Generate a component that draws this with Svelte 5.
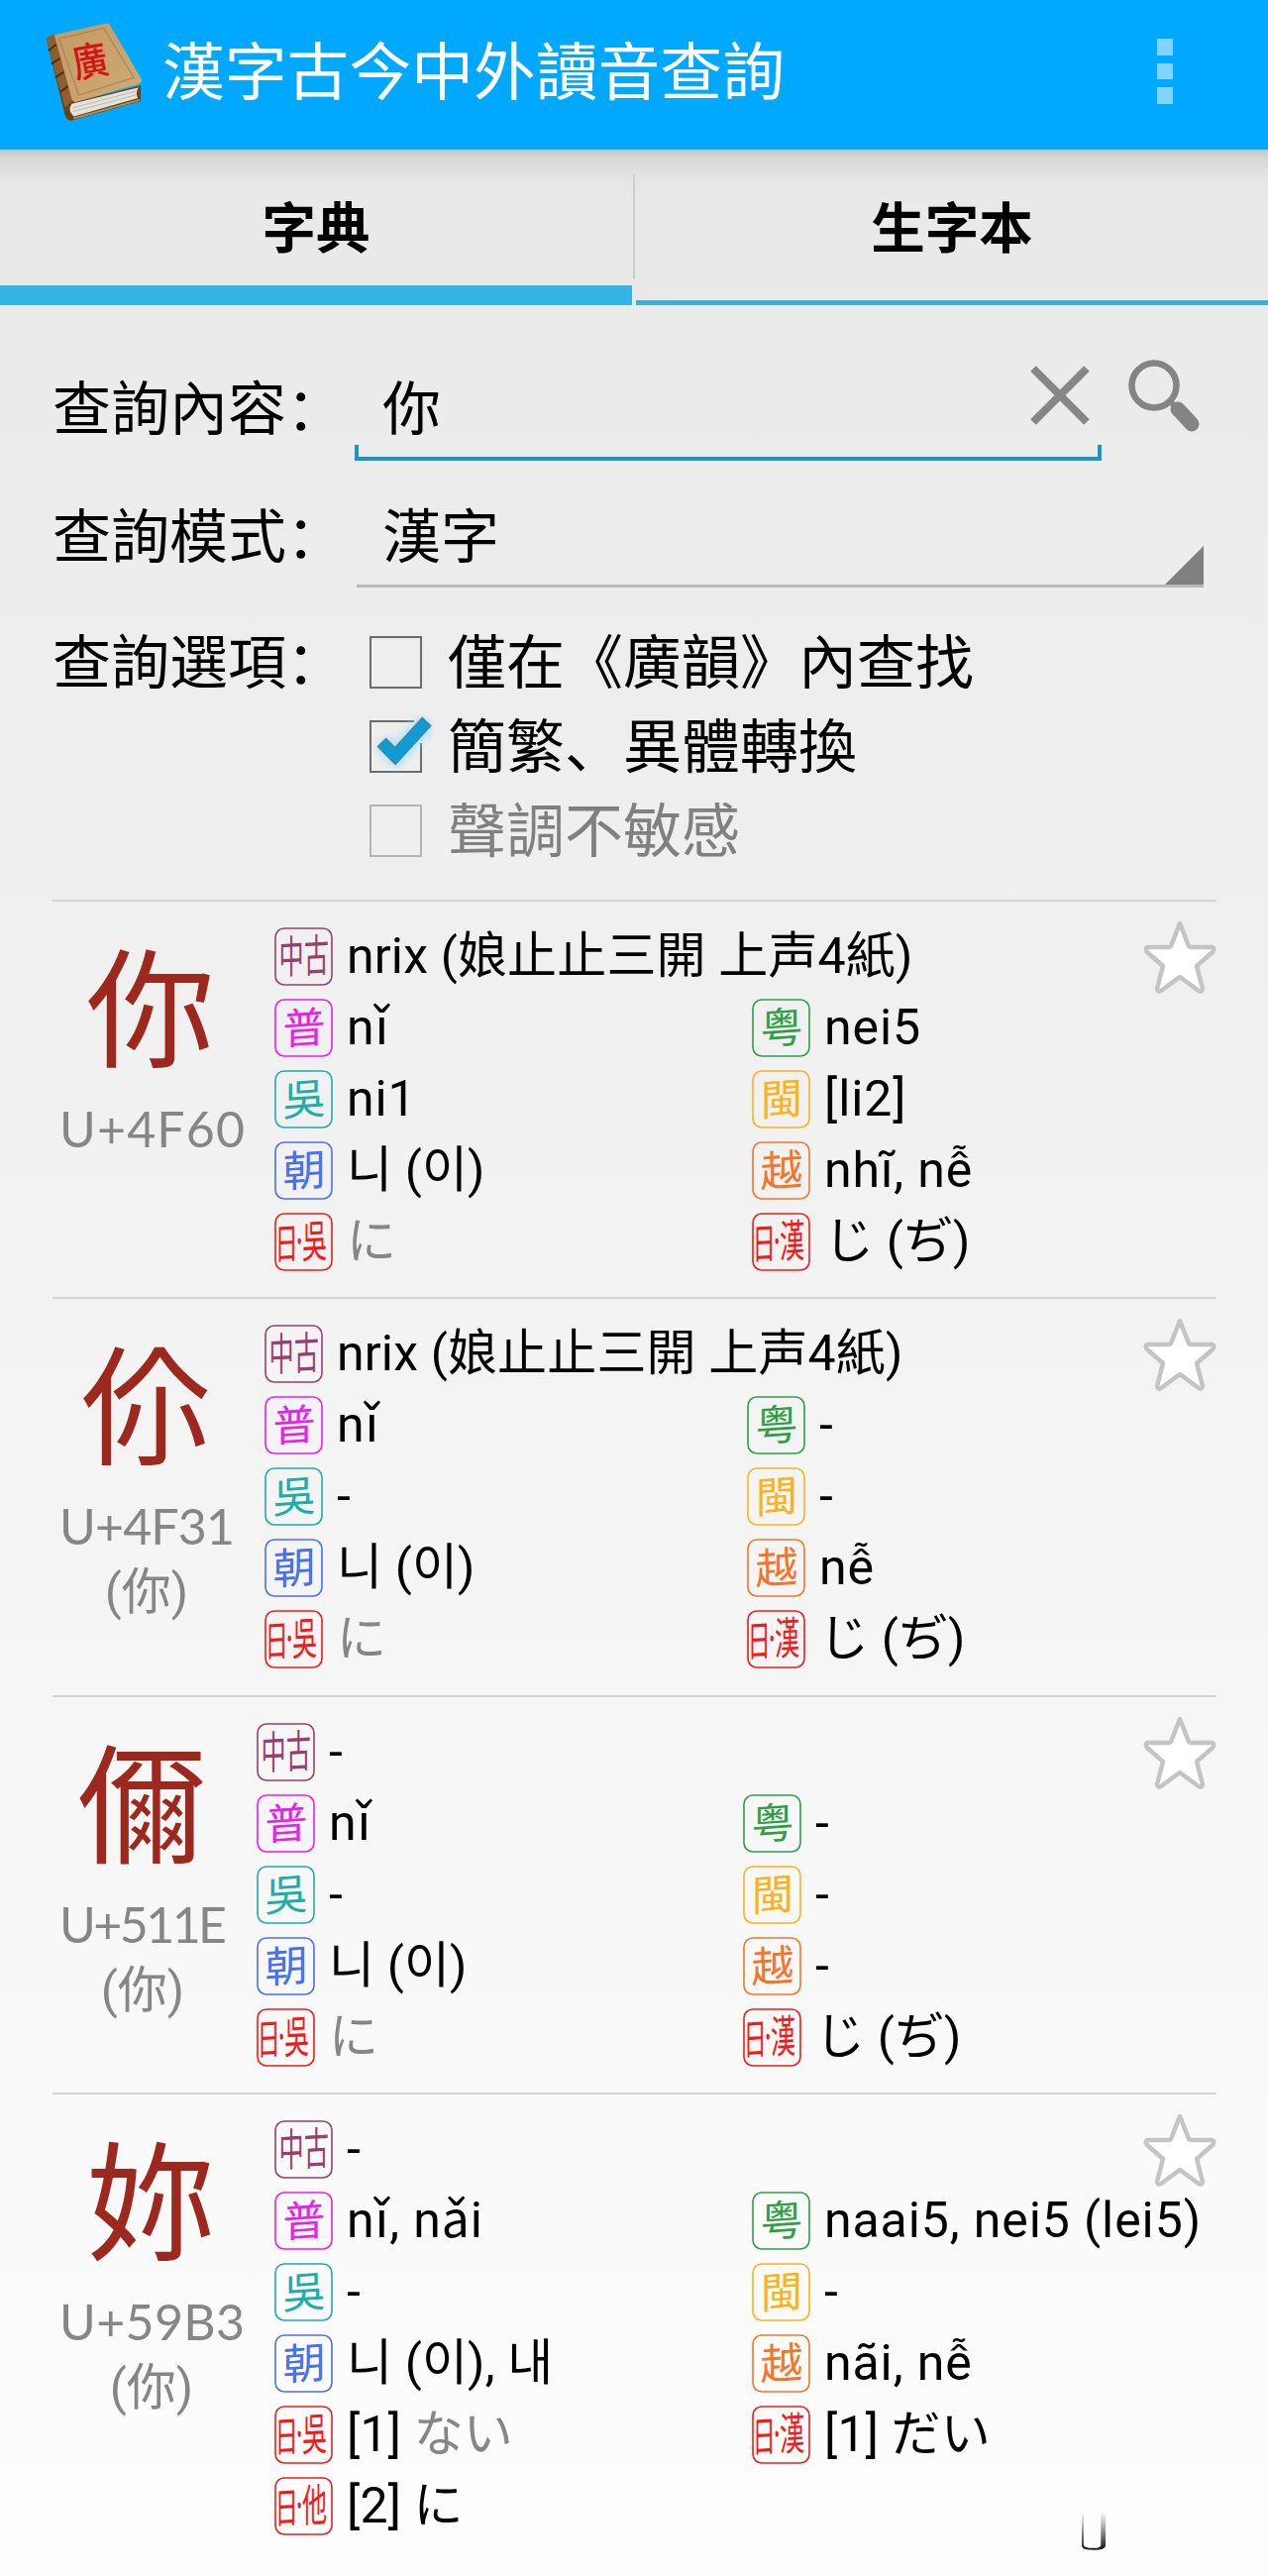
<script>
  // Label, colour and glyph scale for every reading badge
  const kinds = {
    mc: { label: '中古', color: '#96406e' },
    pu: { label: '普', color: '#ea1fea' },
    yue: { label: '粤', color: '#2f9e44' },
    wu: { label: '吳', color: '#1fada4' },
    min: { label: '閩', color: '#fab31c' },
    kr: { label: '朝', color: '#4a70ea' },
    vn: { label: '越', color: '#f2752a' },
    go: { label: '日·吳', color: '#ee1c1c' },
    kan: { label: '日·漢', color: '#ee1c1c' },
    other: { label: '日·他', color: '#ee1c1c' }
  };

  const options = [
    { text: '僅在《廣韻》內查找', checked: false, disabled: false },
    { text: '簡繁、異體轉換', checked: true, disabled: false },
    { text: '聲調不敏感', checked: false, disabled: true }
  ];

  const entries = [
    {
      char: '你', code: 'U+4F60', variant: '', width: 184,
      full: 'nrix (娘止止三開 上声4紙)',
      left: [['pu', 'nǐ'], ['wu', 'ni1'], ['kr', '니 (이)'], ['go', '', 'に']],
      right: [['yue', 'nei5'], ['min', '[li2]'], ['vn', 'nhĩ, nễ'], ['kan', 'じ (ぢ)']]
    },
    {
      char: '伱', code: 'U+4F31', variant: '(你)', width: 174,
      full: 'nrix (娘止止三開 上声4紙)',
      left: [['pu', 'nǐ'], ['wu', '-'], ['kr', '니 (이)'], ['go', '', 'に']],
      right: [['yue', '-'], ['min', '-'], ['vn', 'nễ'], ['kan', 'じ (ぢ)']]
    },
    {
      char: '儞', code: 'U+511E', variant: '(你)', width: 166,
      full: '-',
      left: [['pu', 'nǐ'], ['wu', '-'], ['kr', '니 (이)'], ['go', '', 'に']],
      right: [['yue', '-'], ['min', '-'], ['vn', '-'], ['kan', 'じ (ぢ)']]
    },
    {
      char: '妳', code: 'U+59B3', variant: '(你)', width: 184,
      full: '-',
      left: [['pu', 'nǐ, nǎi'], ['wu', '-'], ['kr', '니 (이), 내'], ['go', '[1] ', 'ない'], ['other', '[2] に']],
      right: [['yue', 'naai5, nei5 (lei5)'], ['min', '-'], ['vn', 'nãi, nễ'], ['kan', '[1] だい']]
    }
  ];

  const latinKinds = ['pu', 'wu', 'yue', 'min', 'vn'];
</script>

{#snippet reading(kind, text, muted)}
  {@const k = kinds[kind]}
  <div class="reading">
    <svg class="badge" viewBox="0 0 59 59" style:color={k.color}>
      <rect class="badge-frame" x="1" y="1" width="57" height="57" rx="9"/>
      {#if k.label.length === 1}
        <g transform="translate(0 2) skewY(-4)">
          <text class="badge-text" x="30" y="45" font-size="43" text-anchor="middle">{k.label}</text>
        </g>
      {:else if k.label.length === 2}
        <g transform="translate(0 1) skewY(-3) scale(0.56 1)">
          <text class="badge-text" x="8" y="46" font-size="45">{k.label}</text>
        </g>
      {:else}
        <g transform="translate(0 1) skewY(-3) scale(0.56 1)">
          <text class="badge-text" x="1" y="46" font-size="42">日</text>
          <circle fill="currentColor" cx="45" cy="29" r="3"/>
          <text class="badge-text" x="50" y="46" font-size="45">{k.label[2]}</text>
        </g>
      {/if}
    </svg>
    <span class="reading-text" class:latin={latinKinds.includes(kind)}>{text}{#if muted}<span class="muted">{muted}</span>{/if}</span>
  </div>
{/snippet}

<div class="app">
  <header class="bar">
    <svg class="book" viewBox="0 0 100 102">
      <defs>
        <linearGradient id="cover" x1="0" y1="0" x2="1" y2="1">
          <stop offset="0" stop-color="#c39a64"/>
          <stop offset="1" stop-color="#cfaa76"/>
        </linearGradient>
      </defs>
      <path fill="#6b4216" d="M1 18 Q2 14 9 13 L30 82 L98 65 V81 L28 101 Q22 102 20 96 Z"/>
      <path fill="#8e5f2a" d="M1 18 Q3 13 9 13 L28 80 L20 88 Z"/>
      <path stroke="#4f2e0c" stroke-width="2" fill="none" d="M3 29 L11 23 M6 43 L15 37 M10 57 L19 51 M15 72 L24 65"/>
      <path fill="#e4e2dd" d="M27 84 L96 67 Q92 72 95 78 L29 97 Q22 91 27 84 Z"/>
      <path stroke="#bdb8ae" stroke-width="1" fill="none" d="M28 88 L93 71 M28 92 L93 75"/>
      <path stroke="#b98d50" stroke-width="2" fill="none" d="M29 99 L97 80"/>
      <path fill="url(#cover)" d="M9 13 L63 1 Q66 1 67 4 L99 59 Q99 63 95 64 L31 82 Q28 82 27 79 Z"/>
      <path stroke="#ad8450" stroke-width="1.2" fill="none" d="M14 17 L60 6 L91 57 L34 75 Z"/>
      <text class="book-char" transform="matrix(0.9 -0.16 0.22 1 31 58)" x="0" y="0" font-size="40">廣</text>
    </svg>
    <h1>漢字古今中外讀音查詢</h1>
    <div class="menu"><i></i><i></i><i></i></div>
  </header>

  <nav class="tabs">
    <div class="tab active">字典</div>
    <div class="tab-divider"></div>
    <div class="tab">生字本</div>
  </nav>

  <section class="form">
    <div class="row query">
      <span class="label">查詢內容：</span>
      <div class="field">
        <span>你</span>
        <svg class="clear" viewBox="0 0 60 60">
          <path d="M3 3 L57 57 M57 3 L3 57"/>
        </svg>
      </div>
      <svg class="search" viewBox="0 0 74 74">
        <circle class="lens" cx="27" cy="27" r="22.5"/>
        <path class="neck" d="M43 43 L52 52"/>
        <path class="handle" d="M54.5 54.5 L51 51 M54 54 L65 66"/>
      </svg>
    </div>
    <div class="row mode">
      <span class="label">查詢模式：</span>
      <div class="spinner">
        <span>漢字</span>
        <svg class="corner" viewBox="0 0 39 39"><path d="M39 0 V39 H0 Z"/></svg>
      </div>
    </div>
    <div class="row choices">
      <span class="label">查詢選項：</span>
      <div class="options">
        {#each options as o}
          <div class="option" class:disabled={o.disabled}>
            <svg class="box" viewBox="0 0 64 64">
              {#if o.checked}
                <path class="box-frame" d="M45 7 H1 V58 H52 V29"/>
                <path class="tick-glow" d="M13 28 L27 42 L58 7"/>
                <path class="tick-edge" d="M12 28 L26 42 L58 7"/>
                <path class="tick" d="M13 29 L26 42 L57 8"/>
              {:else}
                <rect class="box-frame" x="1" y="7" width="51" height="51"/>
              {/if}
            </svg>
            <span>{o.text}</span>
          </div>
        {/each}
      </div>
    </div>
  </section>

  <main class="results">
    {#each entries as e}
      <article class="entry">
        <div class="head" style:width="{e.width}px">
          <div class="char">{e.char}</div>
          <svg class="code" width={e.width} height="50">
            <text x="-1" y="43" textLength={e.width + 3}>{e.code}</text>
          </svg>
          {#if e.variant}<div class="variant">{e.variant}</div>{/if}
        </div>
        <div class="body">
          {@render reading('mc', e.full)}
          <div class="columns">
            <div>
              {#each e.left as r}{@render reading(r[0], r[1], r[2])}{/each}
            </div>
            <div>
              {#each e.right as r}{@render reading(r[0], r[1], r[2])}{/each}
            </div>
          </div>
        </div>
        <svg class="star" viewBox="0 0 74 74">
          <path d="M37 3 L46 26 Q47 27 48 27 L69 27 Q73 28 70 32 L54 46 L60 69 Q59 73 56 71 L37 57 L18 71 Q15 73 14 69 L20 46 L4 32 Q1 28 5 27 L26 27 Q27 27 28 26 Z"/>
        </svg>
      </article>
    {/each}
  </main>

  <svg class="mark" viewBox="0 0 26 38">
    <defs>
      <linearGradient id="fade" x1="0" y1="0" x2="0" y2="1">
        <stop offset="0" stop-color="#333" stop-opacity="0.05"/>
        <stop offset="1" stop-color="#111"/>
      </linearGradient>
    </defs>
    <path fill="url(#fade)" d="M0 0 H2 V33 Q3 36 13 36 Q19 36 20 33 V0 H25 V34 Q23 38 13 38 Q1 38 0 34 Z"/>
  </svg>
</div>

<style>
  :global(body) { background: #fcfcfc; }

  .app {
    position: relative;
    width: 1280px;
    height: 2600px;
    overflow: hidden;
    background: linear-gradient(#e8e8e8, #fdfdfd);
    color: #000;
    font-family: Roboto, 'Noto Sans CJK SC', 'Noto Sans CJK KR', sans-serif;
  }

  /* Title bar */
  .bar {
    display: flex;
    align-items: center;
    height: 151px;
    box-sizing: border-box;
    padding: 0 96px 7px 46px;
    background: #00a9ff;
  }
  .book { width: 98px; height: 101px; }
  .book-char { fill: #d81313; font-weight: 500; }
  h1 {
    flex: 1;
    margin: 4px 0 0 20px;
    color: #fff;
    font-size: 62.8px;
    font-weight: 400;
    line-height: 1;
  }
  .menu { display: flex; flex-direction: column; gap: 8px; }
  .menu i { width: 16.5px; height: 16.5px; background: #80d4ff; }

  /* Tabs */
  .tabs {
    display: flex;
    height: 157px;
    background: linear-gradient(#c6c6c8, #d8d8d8 10px, #e4e4e4 28px, #e9e9e9 48px);
  }
  .tab {
    flex: 1;
    box-sizing: border-box;
    padding-top: 52px;
    border-bottom: 5px solid #3fafd8;
    text-align: center;
    font-size: 54.5px;
    font-weight: bold;
    line-height: 56px;
  }
  .tab.active { border-bottom: 20px solid #33b5e5; }
  .tab-divider { width: 2px; height: 105px; margin: 25px 1px 0; background: #cdcdcd; }

  /* Query form */
  .form { height: 600px; font-size: 59px; line-height: 60px; }
  .row { display: flex; padding-left: 53px; }
  .label { width: 305px; white-space: nowrap; }
  .query { height: 157px; box-sizing: border-box; padding-top: 61px; }
  .query span { padding-top: 15px; }
  .field {
    display: flex;
    justify-content: space-between;
    width: 754px;
    height: 96px;
    box-sizing: border-box;
    padding: 0 12px 0 28px;
    border-bottom: 4px solid #1c96bf;
    background:
      linear-gradient(#1c96bf, #1c96bf) left bottom / 4px 12px no-repeat,
      linear-gradient(#1c96bf, #1c96bf) right bottom / 4px 12px no-repeat;
  }
  .clear { width: 60px; height: 60px; }
  .clear path { stroke: #868686; stroke-width: 8; }
  .search { width: 74px; height: 74px; margin: -7px 0 0 26px; }
  .lens { fill: none; stroke: #848484; stroke-width: 6.5; }
  .neck { stroke: #848484; stroke-width: 6; }
  .handle { stroke: #848484; stroke-width: 15; stroke-linecap: round; }

  .mode { height: 128px; }
  .mode > .label { padding-top: 48px; }
  .spinner {
    display: flex;
    justify-content: space-between;
    align-items: flex-end;
    width: 855px;
    height: 128px;
    box-sizing: border-box;
    margin-left: 2px;
    padding-left: 26px;
    border-bottom: 3px solid #b9b9b9;
  }
  .spinner span { margin-bottom: 17px; }
  .corner { width: 39px; height: 39px; fill: #808080; }

  .choices { padding-top: 45px; }
  .choices .label { padding-top: 2px; }
  .options { padding-left: 15px; }
  .option { display: flex; align-items: center; gap: 15px; height: 60px; margin-bottom: 25px; }
  .option span { padding-top: 4px; }
  .box { width: 64px; height: 64px; }
  .box-frame { fill: none; stroke: #6c6c6c; stroke-width: 2; }
  .tick-glow { fill: none; stroke: #8fdcff; stroke-width: 19; opacity: 0.7; filter: blur(4px); }
  .tick-edge { fill: none; stroke: #4d7f96; stroke-width: 13; }
  .tick { fill: none; stroke: #0f9bd3; stroke-width: 10.5; }
  .disabled { color: #808080; }
  .disabled .box-frame { stroke: #b5b5b5; }

  /* Results */
  .results { padding: 0 52px 0 53px; }
  .entry {
    position: relative;
    display: flex;
    height: 401.4px;
    box-sizing: border-box;
    border-top: 2px solid #d4d4d4;
    padding-left: 8px;
  }
  .head { display: flex; flex-direction: column; align-items: center; color: #868686; }
  .char {
    margin: 47px 2px 0 0;
    color: #9c281e;
    font-size: 130px;
    line-height: 132px;
  }
  .code { margin-top: 26px; overflow: visible; font-family: Lato, sans-serif; font-size: 50px; fill: #868686; }
  .variant { margin-top: 11px; font-size: 50px; line-height: 60px; }

  .body {
    flex: 1;
    margin: 26px -13px 0 32px;
    font-size: 50px;
  }
  .columns { display: grid; grid-template-columns: 1fr 1fr; }
  .reading { display: flex; align-items: center; height: 59px; margin-bottom: 13px; }
  .badge { flex: none; width: 59px; height: 59px; }
  .badge-frame { fill: none; stroke: currentColor; stroke-width: 1.6; }
  .badge-text { fill: currentColor; font-weight: 400; }
  .reading-text { margin-left: 14px; line-height: 59px; white-space: pre; letter-spacing: 0.15px; }
  .latin { letter-spacing: 0.9px; }
  .muted { color: #868686; }

  .star { position: absolute; top: 19px; right: 0; width: 74px; height: 74px; }
  .star path { fill: #fff; stroke: #c4c4c4; stroke-width: 4.5; stroke-linejoin: round; }

  .mark { position: absolute; left: 1092px; top: 2537px; width: 25px; height: 37px; }
</style>
